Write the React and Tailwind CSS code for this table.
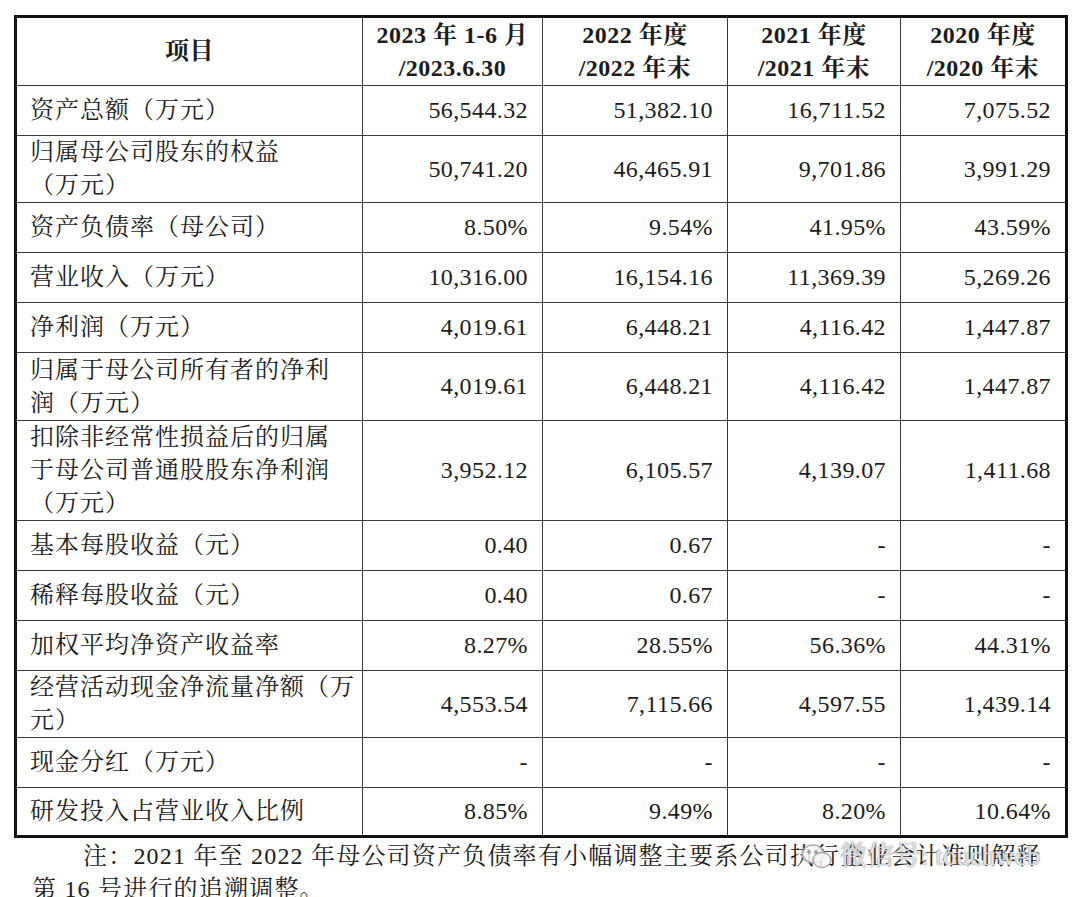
const cols = ["w-[346px]", "w-[180px]", "w-[185px]", "w-[173px]", "w-[164px]"];

const header = [
  ["项目"],
  ["2023 年 1-6 月", "/2023.6.30"],
  ["2022 年度", "/2022 年末"],
  ["2021 年度", "/2021 年末"],
  ["2020 年度", "/2020 年末"],
];

const rows = [
  { h: "h-[50px]", label: ["资产总额（万元）"], v: ["56,544.32", "51,382.10", "16,711.52", "7,075.52"] },
  { h: "h-[67px]", label: ["归属母公司股东的权益", "（万元）"], v: ["50,741.20", "46,465.91", "9,701.86", "3,991.29"] },
  { h: "h-[50px]", label: ["资产负债率（母公司）"], v: ["8.50%", "9.54%", "41.95%", "43.59%"] },
  { h: "h-[50px]", label: ["营业收入（万元）"], v: ["10,316.00", "16,154.16", "11,369.39", "5,269.26"] },
  { h: "h-[50px]", label: ["净利润（万元）"], v: ["4,019.61", "6,448.21", "4,116.42", "1,447.87"] },
  { h: "h-[68px]", label: ["归属于母公司所有者的净利", "润（万元）"], v: ["4,019.61", "6,448.21", "4,116.42", "1,447.87"] },
  { h: "h-[100px]", label: ["扣除非经常性损益后的归属", "于母公司普通股股东净利润", "（万元）"], v: ["3,952.12", "6,105.57", "4,139.07", "1,411.68"] },
  { h: "h-[50px]", label: ["基本每股收益（元）"], v: ["0.40", "0.67", "-", "-"] },
  { h: "h-[50px]", label: ["稀释每股收益（元）"], v: ["0.40", "0.67", "-", "-"] },
  { h: "h-[50px]", label: ["加权平均净资产收益率"], v: ["8.27%", "28.55%", "56.36%", "44.31%"] },
  { h: "h-[67px]", label: ["经营活动现金净流量净额（万", "元）"], v: ["4,553.54", "7,115.66", "4,597.55", "1,439.14"] },
  { h: "h-[50px]", label: ["现金分红（万元）"], v: ["-", "-", "-", "-"] },
  { h: "h-[47px]", label: ["研发投入占营业收入比例"], v: ["8.85%", "9.49%", "8.20%", "10.64%"] },
];

const font = {
  fontFamily: '"Liberation Serif", "Noto Serif CJK SC", "Noto Sans CJK SC", serif',
};

export default function App() {
  return (
    <div
      className="relative w-[1080px] h-[897px] overflow-hidden bg-white text-[#1c1c1c] text-[24px] leading-[33px] tracking-[1px]"
      style={font}
    >
      <div className="ml-[14px] mt-[15px] w-[1054px] border-[3px] border-[#111]">
        <div className="flex h-[68px] border-b border-[#3a3a3a]">
          {header.map((lines, i) => (
            <div
              key={i}
              className={`${cols[i]} ${i < 4 ? "border-r border-[#3a3a3a]" : ""} flex flex-col items-center justify-center font-bold whitespace-nowrap tracking-[0.5px]`}
            >
              {lines.map((l) => (
                <span key={l}>{l}</span>
              ))}
            </div>
          ))}
        </div>

        {rows.map((r, ri) => (
          <div
            key={ri}
            className={`flex ${r.h} ${ri < rows.length - 1 ? "border-b border-[#3a3a3a]" : ""}`}
          >
            <div className="w-[346px] border-r border-[#3a3a3a] flex flex-col justify-center pl-[13px] whitespace-nowrap">
              {r.label.map((l) => (
                <span key={l}>{l}</span>
              ))}
            </div>
            {r.v.map((v, i) => (
              <div
                key={i}
                className={`${cols[i + 1]} ${i < 3 ? "border-r border-[#3a3a3a]" : ""} flex items-center justify-end pr-[14px] tracking-[0.4px]`}
              >
                {v}
              </div>
            ))}
          </div>
        ))}
      </div>

      <div className="ml-[32px] mt-[2px] indent-[51px] whitespace-nowrap tracking-[1.2px]">
        注：2021 年至 2022 年母公司资产负债率有小幅调整主要系公司执行企业会计准则解释
        <br />
        第 16 号进行的追溯调整。
      </div>

      {/* watermark */}
      <div className="absolute left-[800px] top-[840px] flex items-center gap-[6px] text-[27px] tracking-normal text-[rgba(245,245,245,0.88)] [text-shadow:0_0_1px_rgba(120,120,120,1),0_0_2px_rgba(160,160,160,0.8)]">
        <svg width="34" height="28" viewBox="0 0 34 28" fill="rgba(245,245,245,0.85)" stroke="rgba(150,150,150,0.8)" strokeWidth="1.4">
          <ellipse cx="13" cy="11" rx="11" ry="9" />
          <ellipse cx="22" cy="17" rx="9" ry="7.5" />
          <circle cx="9" cy="9" r="1.2" fill="rgba(150,150,150,0.8)" />
          <circle cx="16" cy="9" r="1.2" fill="rgba(150,150,150,0.8)" />
        </svg>
        <span>微信号: touchweb</span>
      </div>
    </div>
  );
}
